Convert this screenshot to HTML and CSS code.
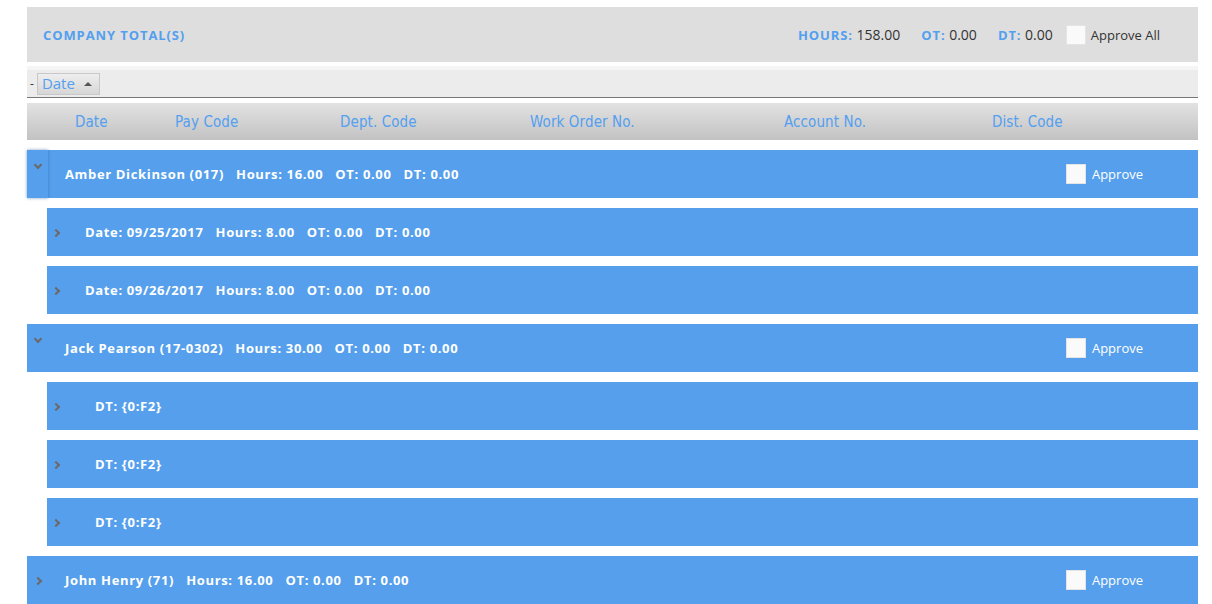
FILE: index.html
```html
<!DOCTYPE html>
<html lang="en">
<head>
    <meta charset="UTF-8">
    <title>Timesheet Approval</title>
    <link rel="stylesheet" href="styles.css">
</head>
<body>
    <div class="grid-wrap">
        <!-- Company totals -->
        <div class="totals-bar">
            <span class="totals-title">COMPANY TOTAL(S)</span>
            <div class="totals-right">
                <span class="tot"><b>HOURS:</b> 158.00</span>
                <span class="tot"><b>OT:</b> 0.00</span>
                <span class="tot"><b>DT:</b> 0.00</span>
                <label class="approve-all"><span class="chk"></span>Approve All</label>
            </div>
        </div>

        <!-- Group by panel -->
        <div class="group-bar">
            <span class="dash">-</span>
            <span class="group-btn">Date <span class="tri"></span></span>
        </div>

        <!-- Column headers -->
        <div class="col-head">
            <span class="c-date">Date</span>
            <span class="c-pay">Pay Code</span>
            <span class="c-dept">Dept. Code</span>
            <span class="c-wo">Work Order No.</span>
            <span class="c-acc">Account No.</span>
            <span class="c-dist">Dist. Code</span>
        </div>

        <!-- Rows -->
        <div class="row parent">
            <span class="exp focused"><span class="chev down"></span></span>
            <span class="row-text">Amber Dickinson (017)&nbsp;&nbsp; Hours: 16.00&nbsp;&nbsp; OT: 0.00&nbsp;&nbsp; DT: 0.00</span>
            <label class="approve"><span class="chk"></span>Approve</label>
        </div>
        <div class="row child">
            <span class="exp"><span class="chev"></span></span>
            <span class="row-text">Date: 09/25/2017&nbsp;&nbsp; Hours: 8.00&nbsp;&nbsp; OT: 0.00&nbsp;&nbsp; DT: 0.00</span>
        </div>
        <div class="row child">
            <span class="exp"><span class="chev"></span></span>
            <span class="row-text">Date: 09/26/2017&nbsp;&nbsp; Hours: 8.00&nbsp;&nbsp; OT: 0.00&nbsp;&nbsp; DT: 0.00</span>
        </div>

        <div class="row parent">
            <span class="exp"><span class="chev down"></span></span>
            <span class="row-text">Jack Pearson (17-0302)&nbsp;&nbsp; Hours: 30.00&nbsp;&nbsp; OT: 0.00&nbsp;&nbsp; DT: 0.00</span>
            <label class="approve"><span class="chk"></span>Approve</label>
        </div>
        <div class="row child">
            <span class="exp"><span class="chev"></span></span>
            <span class="row-text dt">DT: {0:F2}</span>
        </div>
        <div class="row child">
            <span class="exp"><span class="chev"></span></span>
            <span class="row-text dt">DT: {0:F2}</span>
        </div>
        <div class="row child">
            <span class="exp"><span class="chev"></span></span>
            <span class="row-text dt">DT: {0:F2}</span>
        </div>

        <div class="row parent">
            <span class="exp"><span class="chev"></span></span>
            <span class="row-text">John Henry (71)&nbsp;&nbsp; Hours: 16.00&nbsp;&nbsp; OT: 0.00&nbsp;&nbsp; DT: 0.00</span>
            <label class="approve"><span class="chk"></span>Approve</label>
        </div>
    </div>
</body>
</html>
```

FILE: styles.css
```css
* {
    margin: 0;
    padding: 0;
    box-sizing: border-box;
}

body {
    background-color: #fff;
    font-family: 'Open Sans', 'Liberation Sans', sans-serif;
    overflow: hidden;
}

.grid-wrap {
    width: 1171px;
    margin: 7px 0 0 27px;
    display: flex;
    flex-direction: column;
}

/* Company totals */
.totals-bar {
    height: 55px;
    background-color: #dedede;
    display: flex;
    align-items: center;
    justify-content: space-between;
    padding: 0 38px 0 16px;
}

.totals-title {
    color: #539ff0;
    font-weight: 700;
    font-size: 13px;
    letter-spacing: 0.9px;
}

.totals-right {
    display: flex;
    align-items: center;
}

.tot {
    color: #333;
    font-size: 14px;
    margin-right: 21px;
}

.tot b {
    color: #539ff0;
    font-size: 13px;
    letter-spacing: 0.9px;
}

.approve-all {
    display: flex;
    align-items: center;
    font-size: 13px;
    color: #333;
    margin-left: -8px;
}

.chk {
    width: 20px;
    height: 20px;
    background-color: #fafafa;
    border: 1px solid #e4e4e4;
    margin-right: 5px;
}

/* Group panel */
.group-bar {
    margin-top: 4px;
    height: 32px;
    background-color: #ececec;
    border-top: 4px solid #f5f5f5;
    border-bottom: 1px solid #777;
    display: flex;
    align-items: center;
    padding-left: 3px;
}

.dash {
    font-size: 12px;
    color: #333;
    margin-right: 3px;
}

.group-btn {
    width: 63px;
    height: 22px;
    border: 1px solid #c8c8c8;
    background: linear-gradient(#eeeeee, #d6d6d6);
    color: #539ff0;
    font-size: 15px;
    line-height: 19px;
    padding-left: 4px;
    display: flex;
    align-items: center;
}

.tri {
    width: 0;
    height: 0;
    border-left: 4px solid transparent;
    border-right: 4px solid transparent;
    border-bottom: 4px solid #555;
    margin-left: 9px;
}

/* Column headers */
.col-head {
    margin-top: 5px;
    height: 37px;
    background: linear-gradient(#e2e2e2, #c2c2c2);
    position: relative;
    font-family: 'DejaVu Sans Condensed', 'Liberation Sans', sans-serif;
    font-size: 15px;
    letter-spacing: 0.1px;
    color: #539ff0;
    display: flex;
    align-items: center;
}

.col-head span {
    position: absolute;
}

.c-date { left: 48px; }
.c-pay { left: 148px; }
.c-dept { left: 313px; }
.c-wo { left: 503px; }
.c-acc { left: 757px; }
.c-dist { left: 965px; }

/* Rows */
.row {
    height: 48px;
    margin-top: 10px;
    background-color: #569fec;
    display: flex;
    align-items: center;
    color: #fff;
    font-weight: 700;
    font-size: 13px;
}

.row.child {
    margin-left: 20px;
}

.exp {
    width: 21px;
    height: 100%;
    display: flex;
    justify-content: center;
    padding-top: 12px;
}

.exp.focused {
    box-shadow: 0 0 3px rgba(40, 90, 160, 0.6);
}

.chev {
    width: 6px;
    height: 6px;
    border-right: 2px solid #6b6b6b;
    border-bottom: 2px solid #6b6b6b;
    transform: rotate(-45deg);
    margin-top: 10px;
}

.chev.down {
    transform: rotate(45deg);
    margin-top: 0;
}

.row.child .exp {
    width: 18px;
}

.row-text {
    margin-left: 17px;
    white-space: nowrap;
    letter-spacing: 0.65px;
}

.row.child .row-text {
    margin-left: 20px;
}

.row.child .row-text.dt {
    margin-left: 30px;
}

.approve {
    margin-left: auto;
    margin-right: 55px;
    display: flex;
    align-items: center;
    font-weight: 400;
    font-size: 13px;
}

.approve .chk {
    margin-left: 1px;
    margin-right: 6px;
}
```
